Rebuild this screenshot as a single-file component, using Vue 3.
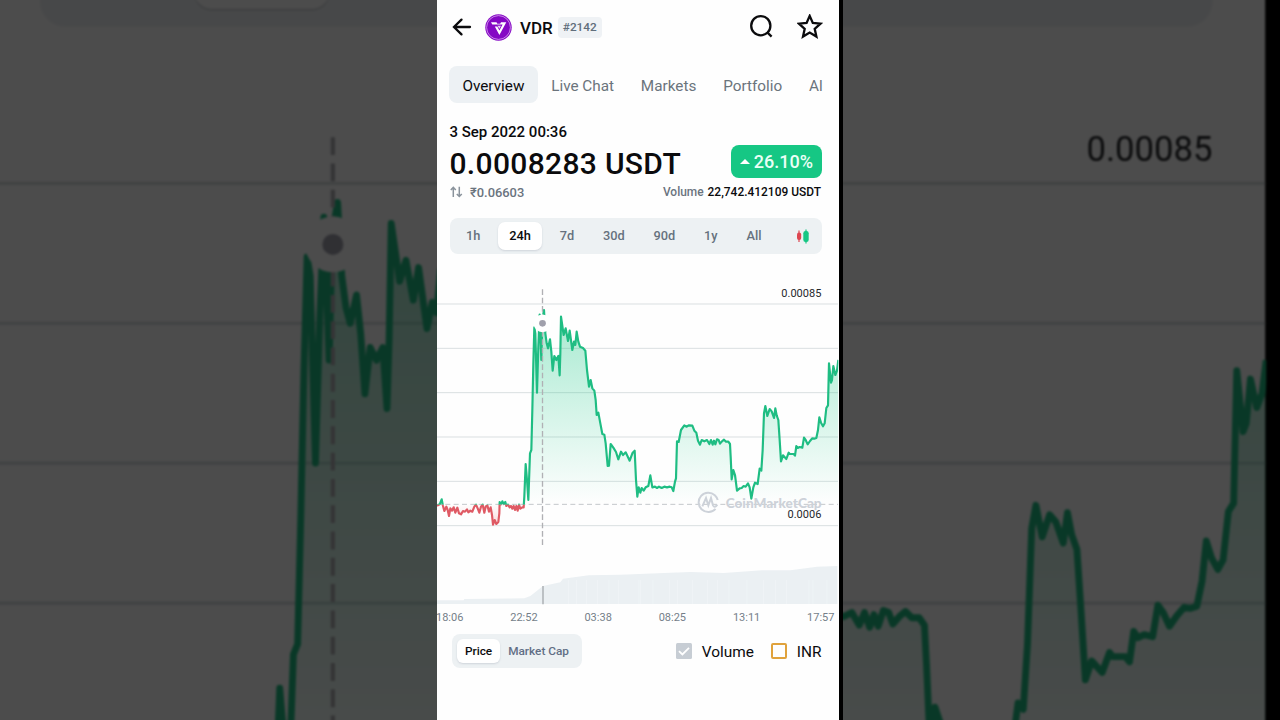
<template>
  <div class="stage">
    <svg class="backdrop" viewBox="-9.5 -111.9 1236.1 703.6" preserveAspectRatio="none">
      <rect x="-20" y="-120" width="1223" height="720" fill="#fff" />
      <rect x="38" y="-187" width="1115" height="110" rx="24" fill="#eff2f5" />
      <rect x="184" y="-180" width="130" height="88" rx="18" fill="#d5d9dd" />
      <rect x="184" y="-184" width="130" height="90" rx="18" fill="#fff" />
      <use href="#price-chart" />
    </svg>

    <main class="phone">
      <header class="top-bar">
        <svg class="back" width="20" height="20" viewBox="0 0 20 20">
          <path d="M18 10H2.500M9.500 2.600L2 10l7.500 7.400" />
        </svg>
        <svg class="coin" width="27" height="27" viewBox="0 0 27 27">
          <circle cx="13.500" cy="13.500" r="13.200" fill="#8508c4" />
          <circle cx="13.500" cy="13.500" r="11.900" fill="none" stroke="#dba6f0" stroke-width=".8" />
          <path d="M6 8.300H11.500L12.300 9.800H15.200L16 8.300H21.300L14.400 21L9.800 12.600H12.300L14.400 16.500L17.600 10.500H7.300Z" fill="#fff" />
          <path d="M12.400 11.700h3.600l-1.600 3z" fill="#ecd0f7" />
        </svg>
        <span class="symbol">VDR</span>
        <span class="rank">#2142</span>
        <svg class="search" width="26" height="26" viewBox="0 0 26 26">
          <circle cx="12.800" cy="11.700" r="9.600" />
          <path d="M19 18.200L23.600 22.600" />
        </svg>
        <svg class="star" width="26" height="26" viewBox="0 0 26 26">
          <path d="M12.700 1.900L15.800 8.900L23.400 9.700L17.700 14.800L19.400 22.600L12.700 18.600L6 22.600L7.700 14.800L2 9.700L9.600 8.900Z" />
        </svg>
      </header>

      <nav class="tabs">
        <span v-for="(tab, i) in tabs" :key="tab" class="tab" :class="{ active: i === 0 }">{{ tab }}</span>
      </nav>

      <section class="summary">
        <div class="date">3 Sep 2022 00:36</div>
        <div class="row price-row">
          <span class="price">0.0008283 USDT</span>
          <span class="change"><i class="caret"></i>26.10%</span>
        </div>
        <div class="row detail-row">
          <span class="converted">
            <svg width="13" height="12" viewBox="0 0 13 12">
              <path d="M3.300 11V1.500M.8 4L3.300 1.300L5.800 4M9.300 .8V10.300M6.800 7.900L9.300 10.500L11.800 7.900" />
            </svg>
            ₹0.06603
          </span>
          <span class="volume">Volume <b>22,742.412109 USDT</b></span>
        </div>
      </section>

      <div class="ranges">
        <span v-for="r in ranges" :key="r" class="range" :class="{ active: r === '24h' }">{{ r }}</span>
        <svg class="candles" width="14" height="16" viewBox="0 0 14 16">
          <path d="M3 2.500v11.500" stroke="#dd4650" stroke-width="1.200" />
          <rect x="1" y="4.500" width="4.200" height="7.500" rx="2" fill="#dd4650" />
          <path d="M10 1.500v14" stroke="#16c784" stroke-width="1.200" />
          <rect x="7.300" y="3" width="5.400" height="11" rx="2.200" fill="#16c784" />
        </svg>
      </div>

      <!-- three chart units per pixel -->
      <svg class="chart" width="402" height="326" viewBox="0 0 1206 978">
        <defs>
          <linearGradient id="gain" x1="0" y1="90" x2="0" y2="673" gradientUnits="userSpaceOnUse">
            <stop offset="0" stop-color="#16c784" stop-opacity=".38" />
            <stop offset="1" stop-color="#16c784" stop-opacity="0" />
          </linearGradient>
          <linearGradient id="loss" x1="0" y1="673" x2="0" y2="736" gradientUnits="userSpaceOnUse">
            <stop offset="0" stop-color="#ea3943" stop-opacity="0" />
            <stop offset="1" stop-color="#ea3943" stop-opacity=".2" />
          </linearGradient>
          <clipPath id="above"><rect x="0" y="0" width="1204" height="674" /></clipPath>
          <clipPath id="below"><rect x="0" y="674" width="1204" height="120" /></clipPath>
        </defs>
        <g id="price-chart">
          <path v-for="y in gridLines" :key="y" :d="`M-20 ${y}H1203`" stroke="#dadfe1" stroke-width="3" />
          <path d="M0 673H1203" stroke="#c3c7cb" stroke-width="3" stroke-dasharray="15 10" />
          <path :d="area" fill="url(#gain)" clip-path="url(#above)" />
          <path :d="area" fill="url(#loss)" clip-path="url(#below)" />
          <path :d="line" class="line up" clip-path="url(#above)" />
          <path :d="line" class="line down" clip-path="url(#below)" />
          <g class="watermark">
            <circle cx="814" cy="667" r="29" fill="none" stroke-dasharray="153 29" transform="rotate(42 814 667)" />
            <path d="M796 679L807 654L814 676L822 654L828 676Q833 686 841 674" fill="none" />
            <text x="866" y="684" textLength="288" lengthAdjust="spacingAndGlyphs">CoinMarketCap</text>
          </g>
          <path d="M316.500 28V800" stroke="#b0b0b4" stroke-width="4" stroke-dasharray="17 8" />
          <circle cx="316.500" cy="130" r="26.500" fill="#fff" />
          <circle cx="316.500" cy="130" r="10" fill="#a0a0ac" />
          <text class="scale" x="1153" y="51">0.00085</text>
          <text class="scale" x="1153" y="715">0.0006</text>
        </g>
        <path :d="volumeArea" fill="#ebf0f3" />
        <path v-for="x in stripes" :key="x" :d="`M${x} 900V972`" stroke="#f2f6f8" stroke-width="2" />
        <path d="M318 918V973" stroke="#a5a9ad" stroke-width="4" />
      </svg>

      <div class="times">
        <span v-for="t in times" :key="t">{{ t }}</span>
      </div>

      <footer class="controls">
        <div class="mode">
          <span class="mode-item active">Price</span>
          <span class="mode-item">Market Cap</span>
        </div>
        <div class="option">
          <svg width="16" height="16" viewBox="0 0 16 16">
            <rect width="16" height="16" rx="1.500" fill="#c7cdd4" />
            <path d="M3 8.200L6.400 11.500L13 4.800" fill="none" stroke="#fff" stroke-width="1.800" />
          </svg>
          <span class="option-label">Volume</span>
        </div>
        <div class="option inr"><i class="box"></i><span class="option-label">INR</span></div>
      </footer>
    </main>
  </div>
</template>

<script setup>
import { computed } from 'vue'

const tabs = ['Overview', 'Live Chat', 'Markets', 'Portfolio', 'Al']
const ranges = ['1h', '24h', '7d', '30d', '90d', '1y', 'All']
const times = ['18:06', '22:52', '03:38', '08:25', '13:11', '17:57']
const gridLines = [72, 205, 338, 471, 604, 737]

const prices = `0,677 8,673 14,658 18,678 22,693 28,680 32,690 36,708 40,685 45,692 50,682 55,698 61,683 66,700
72,703 78,693 84,695 90,688 94,697 100,692 106,695 112,680 117,674 122,685 127,698 132,680 137,674 142,698
146,680 151,676 156,695 161,682 165,705 168,734 173,720 178,732 184,726 187,700 188,666 192,673 196,664
200,672 205,666 208,678 213,674 218,682 222,678 226,686 230,678 234,690 238,678 242,692 246,674 250,686
256,682 260,682 262,650 266,552 270,600 274,660 279,520 283,510 286,390 289,250 292,142 295,160 300,338
304,200 308,104 313,240 316,120 321,90 325,160 329,190 333,205 339,178 343,215 347,272 352,228 358,240
364,228 368,286 370,220 372,110 380,165 386,145 393,183 398,152 406,210 411,185 415,195 419,155 424,185
429,200 438,204 445,212 450,270 456,320 461,300 466,325 472,332 476,360 479,405 484,398 490,430 496,462
502,464 506,490 512,558 516,557 521,492 529,503 537,516 544,538 552,515 558,525 566,517 578,542 587,518
593,512 597,600 601,650 605,622 610,638 614,624 620,632 626,622 634,618 640,586 646,622 654,620 660,624
666,620 674,624 682,620 690,622 698,620 704,622 709,633 714,605 717,595 720,484 725,486 732,450 742,436
748,440 756,436 766,437 772,452 778,458 783,482 789,494 794,480 802,484 810,480 817,492 822,480 827,494
831,482 835,493 840,478 845,480 849,491 855,484 861,479 867,485 874,485 879,492 881,530 884,598 889,570
894,585 900,632 908,625 914,624 920,618 926,620 933,610 938,622 943,656 949,622 954,608 962,612 968,566
973,572 977,510 981,400 985,378 991,408 998,387 1004,394 1011,414 1015,385 1019,406 1024,420 1028,480
1032,544 1038,526 1048,537 1055,518 1058,522 1070,522 1074,527 1078,498 1082,504 1088,501 1096,503
1101,473 1106,480 1112,493 1119,483 1126,475 1132,476 1138,474 1143,450 1147,412 1152,428 1158,439
1163,430 1168,384 1173,376 1176,250 1182,308 1185,300 1189,258 1195,285 1200,272 1204,240`.split(/\s+/)

const line = computed(() => 'M' + prices.join('L'))
const area = computed(() => `${line.value}V673H0Z`)

const volumes = '0,961 80,961 82,957 262,955 280,948 318,918 370,907 378,896 455,886 550,884 700,878 760,876 860,879 975,871 1060,871 1140,860 1201,858'
const volumeArea = `M${volumes.split(' ').join('L')}V972H0Z`
const stripes = [394, 418, 448, 482, 516, 545, 606, 610, 648, 697, 722, 766, 812, 841, 876, 930, 979, 1015, 1048, 1116, 1128, 1170]
</script>

<style>
body {
  margin: 0;
  background: #000;
}
</style>

<style scoped>
.stage {
  position: relative;
  display: flex;
  width: 1280px;
  height: 720px;
  overflow: hidden;
  background: #000;
  font-family: Roboto, "Liberation Sans", sans-serif;
  color: #0b0b0d;
}

/* bleeds past the stage so the blur does not darken its edges */
.backdrop {
  position: absolute;
  top: -10px;
  left: -10px;
  width: 1300px;
  height: 740px;
  filter: blur(1px) brightness(0.298);
}

.phone {
  position: relative;
  box-sizing: border-box;
  width: 406px;
  height: 720px;
  margin-left: 437px;
  border-right: 4px solid #000;
  background: #fefefe;
  display: flex;
  flex-direction: column;
  overflow: hidden;
  white-space: nowrap;
}

.top-bar {
  display: flex;
  align-items: center;
  height: 54px;
  padding: 0 16px 0 15px;
  flex: none;
}

.top-bar svg {
  flex: none;
}

.back,
.search,
.star {
  fill: none;
  stroke: #0b0b0d;
  stroke-width: 2.3;
}

.back {
  stroke-linecap: round;
}

.coin {
  margin-left: 13px;
}

.symbol {
  margin-left: 8px;
  font-size: 17px;
  font-weight: 500;
  line-height: 21px;
  padding-top: 2px;
}

.rank {
  margin-left: 5px;
  padding: 0 5px;
  border-radius: 4px;
  background: #eff2f5;
  color: #616e7c;
  font-size: 11.8px;
  font-weight: 500;
  line-height: 21px;
}

.search {
  margin-left: auto;
}

.star {
  margin-left: 23px;
}

.tabs {
  display: flex;
  height: 37px;
  margin: 12px 0 0 12px;
  flex: none;
}

.tab {
  padding: 0 13.4px;
  border-radius: 8px;
  color: #6b747c;
  font-size: 15.300px;
  line-height: 40px;
}

.tab.active {
  background: #edf1f4;
  color: #0b0b0d;
}

.summary {
  margin: 19px 17.500px 0 12.500px;
  height: 81px;
  flex: none;
}

.row {
  display: flex;
  justify-content: space-between;
  align-items: center;
}

.date {
  font-size: 15px;
  font-weight: 500;
  line-height: 20px;
}

.price-row {
  height: 40px;
}

.price {
  padding-top: 2px;
  font-size: 30px;
  font-weight: 500;
  letter-spacing: 0.32px;
}

.change {
  display: flex;
  align-items: center;
  gap: 4px;
  height: 33px;
  margin-top: -1px;
  padding: 0 8.5px;
  border-radius: 8px;
  background: #16c784;
  color: #eafff6;
  font-size: 18px;
  font-weight: 500;
}

.caret {
  border: 5px solid transparent;
  border-top: 0;
  border-bottom-color: #fff;
}

.detail-row {
  height: 20px;
  color: #6b747e;
  font-size: 12.9px;
  font-weight: 500;
}

.converted {
  display: flex;
  align-items: center;
  gap: 7.500px;
}

.converted svg {
  fill: none;
  stroke: #8a939c;
  stroke-width: 1.5;
}

.volume {
  margin-right: 0.5px;
  font-size: 11.95px;
}

.volume b {
  margin-left: 1px;
  color: #0b0b0d;
  font-weight: 500;
}

.ranges {
  display: flex;
  align-items: center;
  box-sizing: border-box;
  width: 372px;
  height: 36px;
  margin: 15px 0 0 12.500px;
  padding: 0 12px 0 5.500px;
  border-radius: 8px;
  background: #edf1f3;
  flex: none;
}

.range {
  padding: 0 11px;
  margin-right: 6.8px;
  border-radius: 7px;
  color: #66717e;
  font-size: 12.8px;
  font-weight: 500;
  line-height: 28px;
}

.range.active,
.mode-item.active {
  background: #fff;
  color: #0b0b0d;
  box-shadow: 0 1px 2px rgba(88, 102, 126, 0.2);
}

.candles {
  margin-left: auto;
}

.chart {
  display: block;
  margin-top: 26px;
  flex: none;
}

.line {
  fill: none;
  stroke-width: 6.5;
  stroke-linejoin: round;
}

.line.up {
  stroke: #1fbd83;
}

.line.down {
  stroke: #df5a64;
}

.watermark {
  stroke: #cdd2d9;
  stroke-width: 6;
}

.watermark text {
  fill: #cdd2d9;
  stroke: none;
  font: 900 40px Lato, sans-serif;
}

.scale {
  fill: #26282b;
  font-size: 33px;
  text-anchor: end;
}

.times {
  display: flex;
  justify-content: space-between;
  margin: 4px 4.500px 0 -1px;
  color: #757e89;
  font-size: 11px;
  line-height: 16px;
  flex: none;
}

.controls {
  display: flex;
  align-items: center;
  height: 34px;
  margin: 8px 17.500px 0 15px;
  flex: none;
}

.mode {
  display: flex;
  align-items: center;
  box-sizing: border-box;
  height: 34px;
  padding: 0 5px;
  border-radius: 8px;
  background: #edf1f3;
  margin-right: auto;
}

.mode-item {
  padding: 0 8px;
  border-radius: 6px;
  color: #616e85;
  font-size: 11.8px;
  font-weight: 500;
  line-height: 24px;
}

.option {
  display: flex;
  align-items: center;
  gap: 9.5px;
  font-size: 15.4px;
}

.option-label {
  padding-top: 1px;
}

.inr {
  margin-left: 17.5px;
}

.box {
  box-sizing: border-box;
  width: 16px;
  height: 16px;
  border: 2px solid #e0a23c;
  border-radius: 2px;
}
</style>
